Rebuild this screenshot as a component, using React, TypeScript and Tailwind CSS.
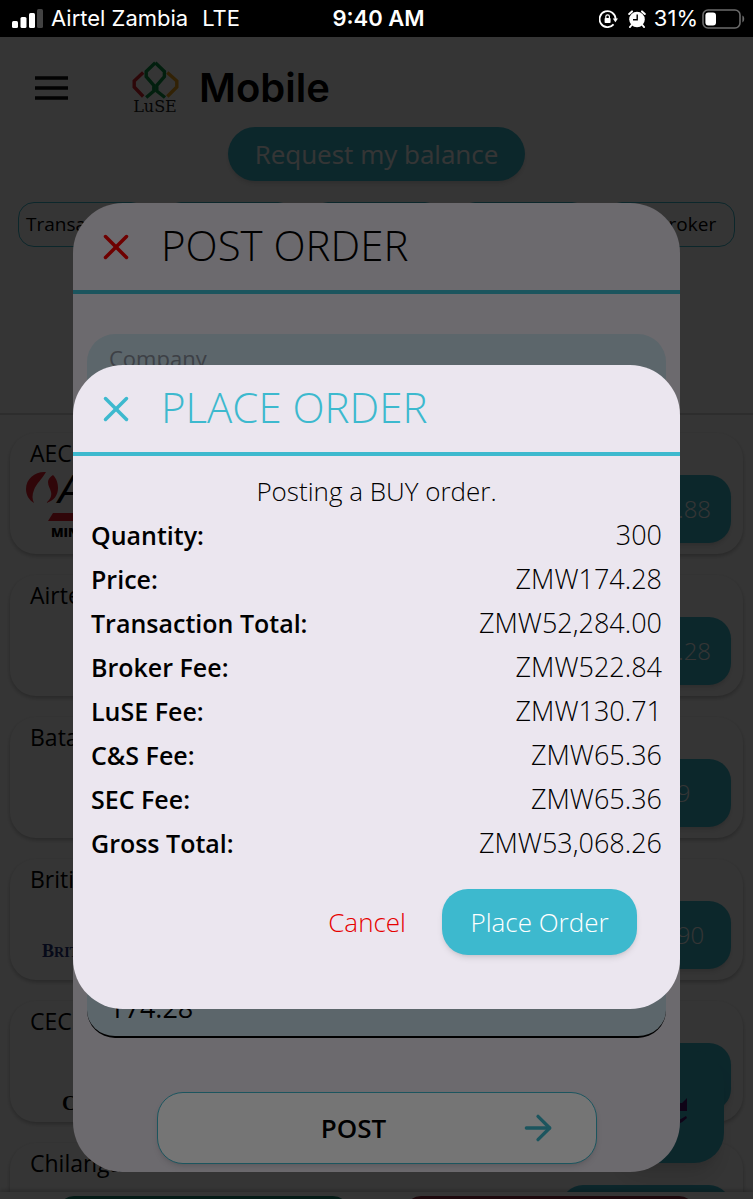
import React from 'react';
import { ArrowRight, X } from 'lucide-react';

interface Stock {
  name: string;
  price: string;
  logo?: React.ReactNode;
}

interface DialogProps {
  title: string;
  titleClass: string;
  closeClass: string;
  children: React.ReactNode;
}

const tabs = ['Transactions', 'Orders', 'Portfolio', 'Prices', 'My Broker'];

const AeciLogo = () => (
  <svg viewBox="0 0 120 72" className="w-30 h-18 -ml-1" aria-hidden="true">
    <path d="M20 5C10 4 0 11 0 22c0 6 3 11 8 14-2-4-2-8 0-13 2-6 8-11 12-18z" fill="#e4202c" />
    <path d="M27 8c4 4 5 9 5 13 0 7-4 13-12 15 4-3 6-7 5-11-1-4-3-6-3-10 0-3 2-5 5-7z" fill="#e4202c" />
    <text x="32" y="36" fontSize="40" fontStyle="italic" fontFamily="Liberation Sans, sans-serif">A</text>
    <path d="M27 46h90l-4 8H22z" fill="#e4202c" />
    <text x="25" y="70" fontSize="13" fontFamily="Open Sans, sans-serif" fontWeight="800">MINING</text>
  </svg>
);

const stocks: Stock[] = [
  { name: 'AECI', price: 'ZMW119.88', logo: <AeciLogo /> },
  { name: 'Airtel', price: 'ZMW174.28' },
  { name: 'Bata', price: 'ZMW2.9' },
  {
    name: 'British',
    price: 'ZMW12.90',
    logo: (
      <span className="ml-3 mt-11 font-['Liberation_Serif',serif] text-lg leading-7 font-bold text-[#25307a]">
        B<span className="text-sm">RITISH</span>
      </span>
    ),
  },
  {
    name: 'CEC',
    price: 'ZMW5.05',
    logo: <span className="ml-8 mt-[54px] font-['Liberation_Serif',serif] text-xl font-bold">CEC</span>,
  },
  { name: 'Chilanga Cement Plc', price: 'ZMW16.00' },
];

const orderLines = [
  { label: 'Quantity:', value: '300' },
  { label: 'Price:', value: 'ZMW174.28' },
  { label: 'Transaction Total:', value: 'ZMW52,284.00' },
  { label: 'Broker Fee:', value: 'ZMW522.84' },
  { label: 'LuSE Fee:', value: 'ZMW130.71' },
  { label: 'C&S Fee:', value: 'ZMW65.36' },
  { label: 'SEC Fee:', value: 'ZMW65.36' },
  { label: 'Gross Total:', value: 'ZMW53,068.26' },
];

const StatusBar = () => (
  <div className="grid h-[37px] shrink-0 grid-cols-[1fr_auto_1fr] items-center bg-black pl-3 pr-2 font-['Inter',sans-serif] text-[22px] text-white">
    <div className="flex items-center gap-2">
      <svg viewBox="0 0 31 20" className="h-5 w-[31px]" fill="#fff" aria-hidden="true">
        <rect x="0" y="12" width="6" height="7" rx="1.5" />
        <rect x="8.5" y="8" width="6" height="11" rx="1.5" />
        <rect x="17" y="4" width="6" height="15" rx="1.5" />
        <rect x="25" y="0" width="6" height="19" rx="1.5" fill="#424242" />
      </svg>
      <span>Airtel Zambia</span>
      <span className="ml-1.5">LTE</span>
    </div>
    <span className="font-semibold">9:40 AM</span>
    <div className="flex items-center justify-end gap-2">
      {/* Rotation lock */}
      <svg viewBox="0 0 19 18" className="h-[18px] w-[19px]" fill="none" aria-hidden="true">
        <path d="M14.6 14.4A8 8 0 1 1 16.6 9" stroke="#fff" strokeWidth="1.8" />
        <path d="M13.8 8.4h5.2l-2.6 3.8z" fill="#fff" />
        <rect x="5.6" y="8" width="6" height="5" rx=".8" fill="#fff" />
        <path d="M6.8 8.4V6.6a1.8 1.8 0 0 1 3.6 0v1.8" stroke="#fff" strokeWidth="1.2" />
      </svg>
      {/* Alarm */}
      <svg viewBox="0 0 18 18" className="ml-0.5 size-[18px]" aria-hidden="true">
        <circle cx="9" cy="9.5" r="7.8" fill="#fff" />
        <path d="M1.2 4 4 1.4M16.8 4 14 1.4M3.6 15 2 17M14.4 15l1.6 2" stroke="#fff" strokeWidth="2" strokeLinecap="round" />
        <path d="M9.2 4.6v5.1H5" stroke="#000" strokeWidth="1.4" fill="none" />
      </svg>
      <span>31%</span>
      <svg viewBox="0 0 43 20" className="-ml-1 h-5 w-[43px]" aria-hidden="true">
        <rect x="1" y="1" width="37" height="18" rx="5" fill="none" stroke="#6b6b6b" strokeWidth="1.6" />
        <rect x="3.4" y="3.4" width="10.6" height="13.2" rx="3" fill="#fff" />
        <path d="M40.4 6.6c2.4 1 2.4 5.8 0 6.8z" fill="#6b6b6b" />
      </svg>
    </div>
  </div>
);

const LuseLogo = () => (
  <div className="flex w-12 flex-col items-center">
    <svg viewBox="0 0 47 38" className="h-[38px] w-[47px]" fill="none" strokeWidth="3.4" aria-hidden="true">
      <path d="M11.2 11.5 2.2 20v6l9 9.5" stroke="#d8242f" />
      <path d="M35.3 11.5 44.8 20v6l-9.5 9.5" stroke="#eea21c" />
      <path d="M23.3 1.8 14.2 10.5v5.2L21.8 24.5V30L14.2 36.5" stroke="#0b9444" />
      <path d="M23.3 1.8 32.4 10.5v5.2L24.8 24.5V30l8.2 6.5" stroke="#0b9444" />
    </svg>
    <span className="font-['DejaVu_Serif',serif] text-base leading-4 text-[#222]">LuSE</span>
  </div>
);

const Dialog: React.FC<DialogProps> = ({ title, titleClass, closeClass, children }) => (
  <section role="dialog" aria-label={title} className="mx-[73px] w-full overflow-hidden rounded-[50px] bg-[#ebe6ef]">
    <header className="flex h-[91px] items-center gap-6 border-b-4 border-[#3db9ce] pl-[22px]">
      <button type="button" aria-label={`Close ${title}`} className={closeClass}>
        <X className="size-[42px]" strokeWidth={2} />
      </button>
      <h2 className={`pb-1 text-[42px] leading-12 font-light ${titleClass}`}>{title}</h2>
    </header>
    {children}
  </section>
);

const Field = ({ label, value }: { label: string; value: string }) => (
  <label className="flex h-[110px] flex-col justify-between rounded-[28px] border-b-2 border-black bg-[#c8dee9] px-[22px] pb-2 pt-2">
    <span className="text-[22px] text-[#868c98]">{label}</span>
    <input defaultValue={value} className="w-full bg-transparent text-[27px] outline-none" />
  </label>
);

const StockCard: React.FC<Stock> = ({ name, price, logo }) => (
  <li className="flex h-[121px] shrink-0 justify-between rounded-[26px] bg-[#fdfdfd] pl-5 pr-3 pt-1.5 shadow-[0_2px_4px_rgba(0,0,0,0.25)]">
    <div className="flex flex-col">
      <h3 className="text-[23px] leading-7">{name}</h3>
      {logo}
    </div>
    <button type="button" className="mt-9 h-[68px] w-[170px] rounded-[22px] bg-[#3db9ce] text-2xl font-light text-white shadow-md">
      {price}
    </button>
  </li>
);

const App: React.FC = () => {
  return (
    <div className="relative flex h-screen flex-col overflow-hidden bg-[#fdfdfd] font-['Open_Sans',sans-serif] text-black">
      <StatusBar />

      <header className="flex items-center pl-[30px] pt-6">
        <button type="button" aria-label="Menu" className="mr-[59px]">
          <svg viewBox="0 0 42 42" className="size-[42px]" aria-hidden="true">
            <path d="M5 11h33M5 21h33M5 31h33" stroke="#111" strokeWidth="3.4" />
          </svg>
        </button>
        <LuseLogo />
        <h1 className="ml-5 font-['Inter',sans-serif] text-[40px] font-semibold leading-[54px]">Mobile</h1>
      </header>

      <button type="button" className="mx-auto mt-3 h-[54px] shrink-0 rounded-full bg-[#3db9ce] px-[27px] text-[26px] text-white shadow-md">
        Request my balance
      </button>

      <nav className="mt-[21px] grid shrink-0 grid-cols-5 gap-[18px] px-[18px]">
        {tabs.map((tab) => (
          <button key={tab} type="button" className="h-[45px] rounded-2xl border border-[#3db9ce] text-[19px]">
            {tab}
          </button>
        ))}
      </nav>

      <ul className="mt-[166px] flex min-h-0 flex-1 flex-col gap-[21px] overflow-hidden border-t-2 border-[#d5d5d5] px-2.5 pt-[18px]">
        {stocks.map((stock) => (
          <StockCard key={stock.name} {...stock} />
        ))}
      </ul>

      <footer className="grid h-[7px] shrink-0 grid-cols-2 gap-14 overflow-hidden bg-white px-[58px] pt-1 shadow-[0_-2px_4px_rgba(0,0,0,0.2)]">
        <button type="button" aria-label="Buy" className="h-16 rounded-2xl bg-[#17806c]" />
        <button type="button" aria-label="Sell" className="h-16 rounded-2xl bg-[#8c2a3c]" />
      </footer>

      {/* Floating action button */}
      <button
        type="button"
        aria-label="Chat"
        className="absolute bottom-9 right-[29px] flex size-28 items-center justify-center rounded-[30px] bg-[#3db9ce] shadow-xl"
      >
        <svg viewBox="0 0 40 40" className="size-10" fill="#4a1672" aria-hidden="true">
          <path d="M1 11l5 5h28l5-5v13H1z" />
          <path d="M4 29q16 12 34 0l1 2q-8 8-19 8T2 31z" />
        </svg>
      </button>

      {/* Post order */}
      <div className="absolute inset-x-0 bottom-0 top-[37px] flex items-start overflow-hidden bg-black/54 pt-[166px]">
        <Dialog title="POST ORDER" titleClass="text-black" closeClass="text-[#f00000]">
          <form className="px-3.5 pb-2 pt-10">
            <div className="flex flex-col gap-[88px]">
              <Field label="Company" value="Airtel" />
              <Field label="Order" value="BUY" />
              <Field label="Quantity" value="300" />
              <Field label="Price" value="174.28" />
            </div>
            <button
              type="button"
              className="mx-auto mt-[54px] flex h-[72px] w-[440px] items-center rounded-[26px] border border-[#3db9ce] bg-white pl-8 pr-[38px] text-[26px] font-semibold shadow-md"
            >
              <span className="flex-1">POST</span>
              <ArrowRight className="size-10 text-[#3db9ce]" strokeWidth={2} />
            </button>
          </form>
        </Dialog>
      </div>

      {/* Order confirmation */}
      <div className="absolute inset-x-0 bottom-0 top-[37px] flex items-start overflow-hidden bg-black/54 pt-[328px]">
        <Dialog title="PLACE ORDER" titleClass="text-[#3db9ce]" closeClass="text-[#3db9ce]">
          <div className="px-[18px] pb-[54px] pt-[13px] text-[26px] leading-[44px]">
            <p className="text-center font-light">Posting a BUY order.</p>
            <dl>
              {orderLines.map(({ label, value }) => (
                <div key={label} className="flex justify-between">
                  <dt className="text-[25px] font-semibold">{label}</dt>
                  <dd className="text-[27px] font-light">{value}</dd>
                </div>
              ))}
            </dl>
            <div className="mt-6 flex items-center justify-end gap-9 pr-[25px]">
              <button type="button" className="font-light text-[#e60000]">
                Cancel
              </button>
              <button type="button" className="h-[66px] w-[195px] rounded-[26px] bg-[#3db9ce] font-light text-white shadow-md">
                Place Order
              </button>
            </div>
          </div>
        </Dialog>
      </div>
    </div>
  );
};

export default App;
